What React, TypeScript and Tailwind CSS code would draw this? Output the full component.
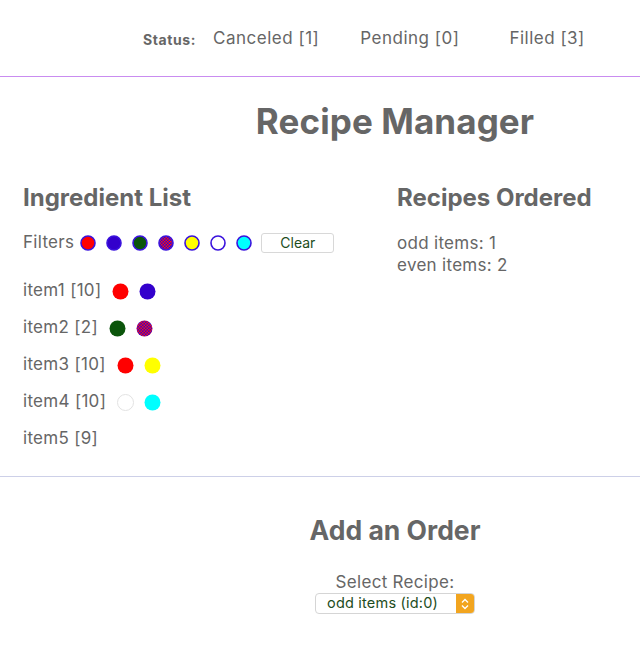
const statuses = [
  { label: 'Canceled', count: 1, ml: 'ml-[17px]' },
  { label: 'Pending', count: 0, ml: 'ml-[41px]' },
  { label: 'Filled', count: 3, ml: 'ml-[50px]' },
];

const filterColors = ['#ff0000', '#3300cc', '#0b550b', 'pattern', '#ffff00', '#ffffff', '#00ffff'];

const items = [
  { name: 'item1', qty: 10, colors: ['#ff0000', '#3300cc'] },
  { name: 'item2', qty: 2, colors: ['#0b550b', 'pattern'] },
  { name: 'item3', qty: 10, colors: ['#ff0000', '#ffff00'] },
  { name: 'item4', qty: 10, colors: ['#ffffff', '#00ffff'] },
  { name: 'item5', qty: 9, colors: [] },
];

function Dot({ color, size, border }: { color: string; size: number; border?: boolean }) {
  const r = size / 2;
  const id = `chk-${size}-${border ? 'b' : 'n'}`;
  return (
    <svg width={size} height={size} viewBox={`0 0 ${size} ${size}`} className="shrink-0">
      <defs>
        <pattern id={id} width="3" height="3" patternUnits="userSpaceOnUse">
          <rect width="3" height="3" fill="#3300cc" />
          <rect width="1.5" height="1.5" fill="#ff1010" />
          <rect x="1.5" y="1.5" width="1.5" height="1.5" fill="#ff1010" />
        </pattern>
      </defs>
      <circle
        cx={r}
        cy={r}
        r={border ? r - 1 : r - 0.5}
        fill={color === 'pattern' ? `url(#${id})` : color}
        stroke={border ? '#3a12dd' : '#e2e2e2'}
        strokeWidth={border ? 1.6 : color === '#ffffff' ? 1 : 0}
      />
    </svg>
  );
}

export default function App() {
  return (
    <div className="min-h-[665px] bg-white text-[#666] font-['Inter','Liberation_Sans',sans-serif]">
      <header className="h-[77px] border-b border-[#c98cf0] flex items-center pl-[143px] pt-[2px]">
        <span className="text-[14px] font-bold tracking-[0.6px]">Status:</span>
        {statuses.map((s) => (
          <span key={s.label} className={`text-[17px] tracking-[0.5px] ${s.ml}`}>
            {s.label} [{s.count}]
          </span>
        ))}
      </header>

      <h1 className="text-[35px] font-bold text-center pl-[150px] mt-[22px] leading-[44px] tracking-[0.1px]">
        Recipe Manager
      </h1>

      <section className="flex mt-[40px] pb-[26px] border-b border-[#cdd0e8]">
        <div className="pl-[23px] w-[397px]">
          <h2 className="text-[24px] font-bold leading-[30px]">Ingredient List</h2>
          <div className="flex items-center mt-[19px] h-[22px]">
            <span className="text-[17px] tracking-[0.3px] mr-[6px]">Filters</span>
            <div className="flex gap-[10px]">
              {filterColors.map((c, i) => (
                <Dot key={i} color={c} size={16} border />
              ))}
            </div>
            <button className="ml-[9px] w-[73px] h-[20px] border border-[#d8d8d8] rounded-[3px] text-[14px] text-[#1d4d1d] leading-none">
              Clear
            </button>
          </div>
          <ul className="mt-[26px] flex flex-col gap-[15px]">
            {items.map((it) => (
              <li key={it.name} className="flex items-center h-[22px] text-[17px] tracking-[0.3px]">
                <span>
                  {it.name} [{it.qty}]
                </span>
                <div className="flex gap-[10px] ml-[11px]">
                  {it.colors.map((c, i) => (
                    <Dot key={i} color={c} size={17} />
                  ))}
                </div>
              </li>
            ))}
          </ul>
        </div>
        <div>
          <h2 className="text-[24px] font-bold leading-[30px]">Recipes Ordered</h2>
          <div className="mt-[19px] text-[17px] leading-[22px] tracking-[0.3px]">
            <p>odd items: 1</p>
            <p>even items: 2</p>
          </div>
        </div>
      </section>

      <section className="pl-[150px] flex flex-col items-center">
        <h2 className="text-[26.5px] font-bold mt-[36px] leading-[34px]">Add an Order</h2>
        <label className="text-[17px] tracking-[0.3px] mt-[24px] leading-[22px]">Select Recipe:</label>
        <div className="flex items-center w-[160px] h-[21px] border border-[#d5d5d5] rounded-[4px] overflow-hidden">
          <span className="flex-1 text-[14.5px] tracking-[0.2px] text-[#1d4d1d] pl-[11px] leading-none">odd items (id:0)</span>
          <span className="w-[18px] h-full bg-[#f2a51f] flex items-center justify-center">
            <svg width="10" height="14" viewBox="0 0 10 14" fill="none" stroke="white" strokeWidth="1.4">
              <path d="M2 5.5 L5 2.5 L8 5.5" />
              <path d="M2 8.5 L5 11.5 L8 8.5" />
            </svg>
          </span>
        </div>
      </section>
    </div>
  );
}
